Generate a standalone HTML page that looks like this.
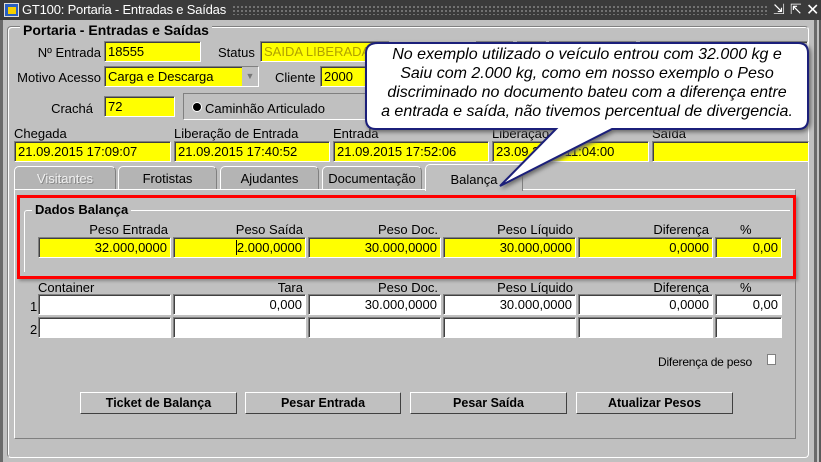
<!DOCTYPE html>
<html><head><meta charset="utf-8"><style>
*{margin:0;padding:0;box-sizing:border-box}
body{width:821px;height:462px;background:#c0c0c0;position:relative;overflow:hidden;font-family:"Liberation Sans",Arial,sans-serif;font-size:13px;color:#000}
.a{position:absolute}
.f{position:absolute;height:21px;border:1px solid #808080;border-right-color:#fff;border-bottom-color:#fff;box-shadow:inset 1px 1px 0 #404040;background:#ffff00;font-size:13px;line-height:19px;padding:0 3px;white-space:nowrap;overflow:hidden}
.w{background:#fff}
.r{text-align:right}
.l{position:absolute;font-size:13px;white-space:nowrap}
.lr{position:absolute;text-align:right;white-space:nowrap}
.tab{position:absolute;top:166px;height:24px;border:1px solid #fff;border-right-color:#808080;border-bottom:none;border-radius:5px 5px 0 0;background:#b4b4b4;text-align:center;line-height:24px}
.btn{position:absolute;top:392px;height:22px;border:1px solid #fff;border-right-color:#404040;border-bottom-color:#404040;background:#c0c0c0;font-weight:bold;font-size:12.5px;text-align:center;line-height:20px}
</style></head><body>
<!-- title bar -->
<div class="a" style="left:0;top:0;width:821px;height:20px;background:#3b3b3b"></div>
<div class="a" style="left:228px;top:5px;width:540px;height:10px;background-image:radial-gradient(#777 1px,transparent 1.2px);background-size:4px 4px"></div>
<div class="a" style="left:4px;top:3px;width:15px;height:14px;background:#2a5fc0;border:1px solid #ddd"><div style="position:absolute;left:3px;top:3px;width:8px;height:7px;background:#f5d000"></div></div>
<div class="a" style="left:22px;top:2px;color:#fff;font-size:13px;letter-spacing:-0.2px;background:#3b3b3b;padding-right:6px">GT100: Portaria - Entradas e Saídas</div>
<div class="a" style="left:773px;top:1px;color:#fff;font-size:14px">⇲</div>
<div class="a" style="left:790px;top:1px;color:#fff;font-size:14px">⇱</div>
<div class="a" style="left:806px;top:0px;color:#fff;font-size:16px">✕</div>
<!-- window borders -->
<div class="a" style="left:0;top:20px;width:3px;height:442px;background:#6a6a6a"></div>
<div class="a" style="left:814px;top:20px;width:3px;height:442px;background:#6a6a6a"></div>
<div class="a" style="left:819px;top:20px;width:2px;height:442px;background:#5a5a5a"></div>
<div class="a" style="left:7px;top:26px;width:802px;height:432px;border:1px solid #808080;border-right-color:#fff;border-bottom-color:#fff;box-shadow:1px 1px 0 #fff inset;border-radius:4px"></div>
<div class="a" style="left:20px;top:22px;background:#c0c0c0;padding:0 3px;font-weight:bold;font-size:14px">Portaria - Entradas e Saídas</div>
<!-- row 1 -->
<div class="lr" style="left:20px;width:81px;top:45px">Nº Entrada</div>
<div class="f" style="left:104px;top:41px;width:97px">18555</div>
<div class="l" style="left:218px;top:45px">Status</div>
<div class="f" style="left:260px;top:41px;width:130px;color:#b0a000">SAIDA LIBERADA</div>
<div class="f" style="left:476px;top:41px;width:38px;background:#c0c0c0"></div>
<div class="f" style="left:517px;top:41px;width:30px;background:#c0c0c0"></div>
<div class="f" style="left:549px;top:41px;width:88px;background:#c0c0c0"></div>
<div class="f" style="left:640px;top:41px;width:168px;background:#c0c0c0"></div>
<!-- row 2 -->
<div class="lr" style="left:10px;width:91px;top:70px">Motivo Acesso</div>
<div class="f" style="left:104px;top:66px;width:155px">Carga e Descarga<span style="position:absolute;right:0;top:0;width:16px;height:19px;background:#c0c0c0;color:#777;font-size:9px;text-align:center">▼</span></div>
<div class="l" style="left:275px;top:70px">Cliente</div>
<div class="f" style="left:320px;top:66px;width:60px">2000</div>
<!-- row 3 -->
<div class="lr" style="left:20px;width:73px;top:101px">Crachá</div>
<div class="f" style="left:104px;top:96px;width:71px">72</div>
<div class="a" style="left:183px;top:93px;width:200px;height:27px;border:1px solid #808080;border-right-color:#fff;border-bottom-color:#fff"></div>
<div class="a" style="left:193px;top:103px;width:8px;height:8px;border-radius:50%;background:#000;box-shadow:0 0 0 1px #fff"></div>
<div class="l" style="left:205px;top:101px">Caminhão Articulado</div>
<!-- row 4 -->
<div class="l" style="left:14px;top:126px">Chegada</div>
<div class="l" style="left:174px;top:126px">Liberação de Entrada</div>
<div class="l" style="left:333px;top:126px">Entrada</div>
<div class="l" style="left:492px;top:126px">Liberação</div>
<div class="l" style="left:652px;top:126px">Saída</div>
<div class="f" style="left:14px;top:141px;width:157px">21.09.2015 17:09:07</div>
<div class="f" style="left:174px;top:141px;width:156px">21.09.2015 17:40:52</div>
<div class="f" style="left:333px;top:141px;width:156px">21.09.2015 17:52:06</div>
<div class="f" style="left:492px;top:141px;width:157px">23.09.2015 11:04:00</div>
<div class="f" style="left:652px;top:141px;width:157px"></div>
<!-- tabs -->
<div class="tab" style="left:14px;width:102px;color:#f0f0f0;text-shadow:1px 1px 0 #888">Visitantes</div>
<div class="tab" style="left:118px;width:99px">Frotistas</div>
<div class="tab" style="left:220px;width:99px">Ajudantes</div>
<div class="tab" style="left:322px;width:100px">Documentação</div>
<div class="tab" style="left:425px;width:98px;top:164px;height:27px;background:#c0c0c0;z-index:2;line-height:30px">Balança</div>
<div class="a" style="left:14px;top:189px;width:782px;height:250px;border:1px solid #fff;border-right-color:#808080;border-bottom-color:#808080"></div>
<!-- Dados balança -->
<div class="a" style="left:17px;top:195px;width:779px;height:84px;border:3px solid #f00;box-shadow:2px 2px 3px #888"></div>
<div class="a" style="left:24px;top:210px;width:766px;height:62px;border-top:1px solid #fff;border-left:1px solid #fff;border-radius:3px 0 0 0"></div>
<div class="a" style="left:32px;top:202px;background:#c0c0c0;padding:0 3px;font-weight:bold;font-size:13px">Dados Balança</div>
<div class="lr" style="left:38px;width:130px;top:222px">Peso Entrada</div>
<div class="lr" style="left:173px;width:130px;top:222px">Peso Saída</div>
<div class="lr" style="left:308px;width:130px;top:222px">Peso Doc.</div>
<div class="lr" style="left:443px;width:130px;top:222px">Peso Líquido</div>
<div class="lr" style="left:578px;width:131px;top:222px">Diferença</div>
<div class="a" style="left:740px;top:222px">%</div>
<div class="f r" style="left:38px;top:237px;width:133px">32.000,0000</div>
<div class="f r" style="left:173px;top:237px;width:133px"><span style="border-left:1px solid #000">2</span>.000,0000</div>
<div class="f r" style="left:308px;top:237px;width:133px">30.000,0000</div>
<div class="f r" style="left:443px;top:237px;width:133px">30.000,0000</div>
<div class="f r" style="left:578px;top:237px;width:135px">0,0000</div>
<div class="f r" style="left:715px;top:237px;width:67px">0,00</div>
<!-- container table -->
<div class="l" style="left:38px;top:280px">Container</div>
<div class="lr" style="left:173px;width:130px;top:280px">Tara</div>
<div class="lr" style="left:308px;width:130px;top:280px">Peso Doc.</div>
<div class="lr" style="left:443px;width:130px;top:280px">Peso Líquido</div>
<div class="lr" style="left:578px;width:131px;top:280px">Diferença</div>
<div class="a" style="left:740px;top:280px">%</div>
<div class="l" style="left:30px;top:299px">1</div>
<div class="l" style="left:30px;top:322px">2</div>
<div class="f w r" style="left:38px;top:294px;width:133px"></div>
<div class="f w r" style="left:173px;top:294px;width:133px">0,000</div>
<div class="f w r" style="left:308px;top:294px;width:133px">30.000,0000</div>
<div class="f w r" style="left:443px;top:294px;width:133px">30.000,0000</div>
<div class="f w r" style="left:578px;top:294px;width:135px">0,0000</div>
<div class="f w r" style="left:715px;top:294px;width:67px">0,00</div>
<div class="f w" style="left:38px;top:317px;width:133px"></div>
<div class="f w" style="left:173px;top:317px;width:133px"></div>
<div class="f w" style="left:308px;top:317px;width:133px"></div>
<div class="f w" style="left:443px;top:317px;width:133px"></div>
<div class="f w" style="left:578px;top:317px;width:135px"></div>
<div class="f w" style="left:715px;top:317px;width:67px"></div>
<div class="l" style="left:658px;top:355px;font-size:12px;letter-spacing:-0.2px">Diferença de peso</div>
<div class="a" style="left:767px;top:354px;width:9px;height:11px;background:#fff;border:1px solid #808080"></div>
<!-- buttons -->
<div class="btn" style="left:80px;width:157px">Ticket de Balança</div>
<div class="btn" style="left:245px;width:156px">Pesar Entrada</div>
<div class="btn" style="left:410px;width:157px">Pesar Saída</div>
<div class="btn" style="left:576px;width:157px">Atualizar Pesos</div>
<!-- callout -->
<svg class="a" style="left:0;top:0;z-index:5" width="821" height="462">
<path d="M378,43 H798 Q808,43 808,53 V119 Q808,129 798,129 H612 L500,186 L556,129 H376 Q366,129 366,119 V53 Q366,43 378,43 Z" fill="#fff" stroke="#1b1f7a" stroke-width="2" style="filter:drop-shadow(2px 2px 2px #666)"/>
</svg>
<div class="a" style="left:366px;top:45px;width:442px;z-index:6;text-align:center;font-style:italic;font-size:16px;line-height:19px;color:#000">No exemplo utilizado o veículo entrou com 32.000 kg e<br>Saiu com 2.000 kg, como em nosso exemplo o Peso<br>discriminado no documento bateu com a diferença entre<br>a entrada e saída, não tivemos percentual de divergencia.</div>
</body></html>
